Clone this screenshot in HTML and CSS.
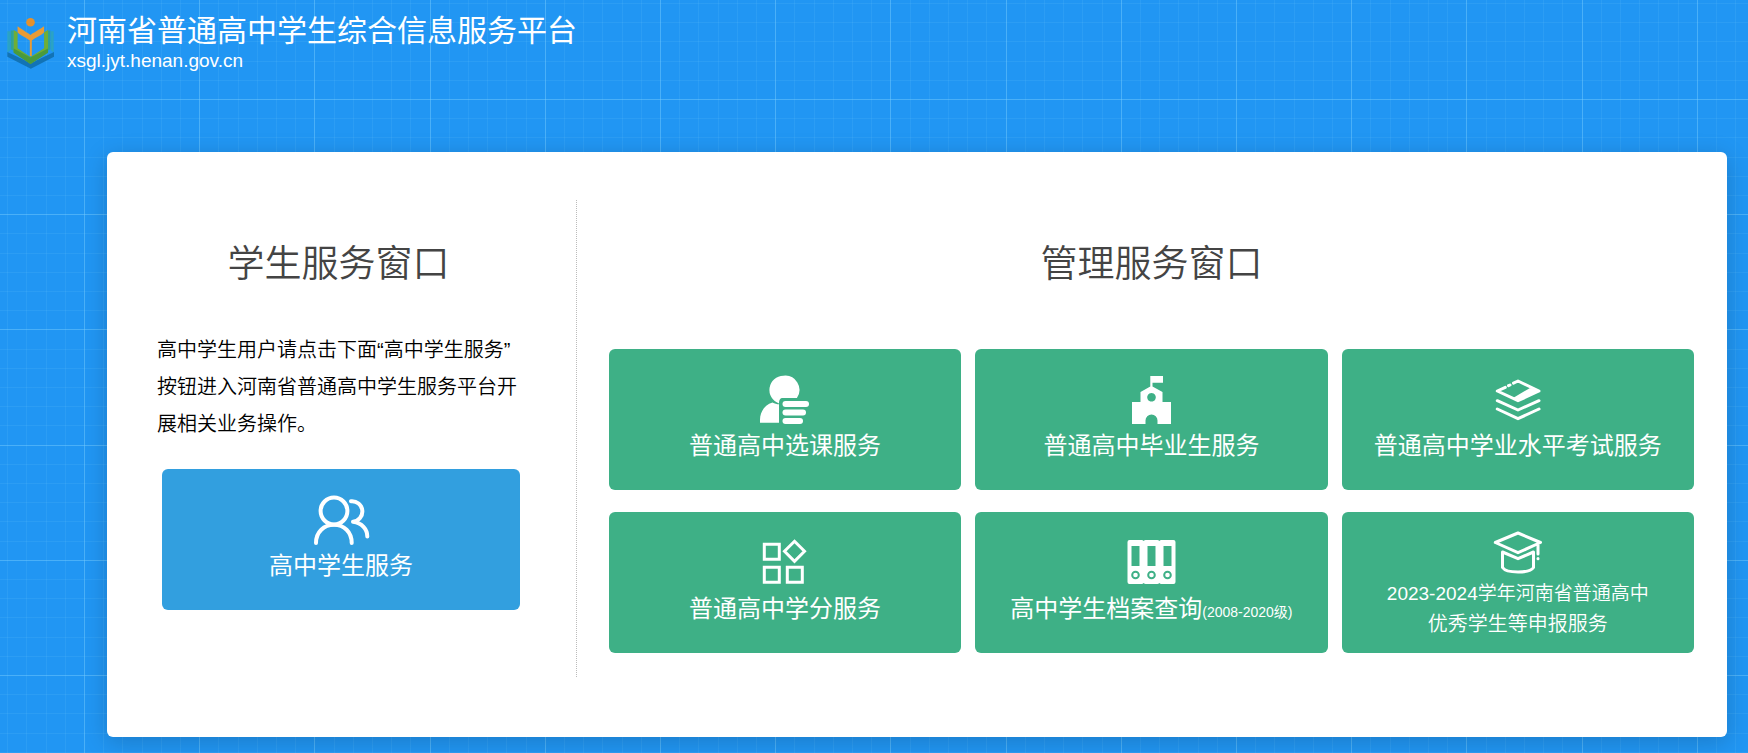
FILE: index.html
```html
<!DOCTYPE html>
<html lang="zh-CN">
<head>
<meta charset="utf-8">
<meta name="viewport" content="width=device-width, initial-scale=1">
<title>河南省普通高中学生综合信息服务平台</title>
<link rel="stylesheet" href="styles.css">
</head>
<body>
<header class="site-header">
  <svg class="logo" viewBox="20 54 142 154" aria-hidden="true">
    <path d="M21 94h8v58l-8 6zM161 94h-8v58l8 6z" fill="#2ba3c4"/>
    <path d="M31 92h9v60l-9-3zM151 92h-9v60l9-3z" fill="#2fa295"/>
    <path d="M21 157l71 34 70-34v14l-70 36-71-36z" fill="#1273b5"/>
    <path d="M40 90l12 7v48l39 27v21l-51-36zM144 90l-12 7v48l-41 27v21l53-36z" fill="#6fae35"/>
    <path d="M40 146l51 27v20l-51-34zM144 146l-53 27v20l53-34z" fill="#4a9a3c"/>
    <path d="M52 79c8 6 24 16 39 26 15-10 33-20 41-26v18c-5 8-26 16-37 25v47h-6v-47c-12-9-31-17-37-25z" fill="#e99b35"/>
    <circle cx="91" cy="67" r="13" fill="#e6912c"/>
  </svg>
  <div class="brand">
    <h1 class="site-title">河南省普通高中学生综合信息服务平台</h1>
    <p class="site-url">xsgl.jyt.henan.gov.cn</p>
  </div>
</header>

<main class="panel">
  <section class="student">
    <h2 class="heading">学生服务窗口</h2>
    <p class="intro">高中学生用户请点击下面“高中学生服务”按钮进入河南省普通高中学生服务平台开展相关业务操作。</p>
    <a class="card card-blue" href="#student">
      <svg class="icon line" viewBox="0 0 54 54" aria-hidden="true">
        <circle cx="20" cy="17" r="13.4"/>
        <path d="M2 49C2 38 10 30.8 20 30.8S37.700 38 37.700 49"/>
        <path d="M37 7.200A10.200 10.200 0 0 1 39 27.800C48 29 53.300 35 53.300 42.500"/>
      </svg>
      <span class="label">高中学生服务</span>
    </a>
  </section>

  <section class="manage">
    <h2 class="heading">管理服务窗口</h2>
    <div class="cards">
      <a class="card" href="#course">
        <svg class="icon" viewBox="0 0 54 54" aria-hidden="true">
          <path d="M25.300 1.700a14.300 14.300 0 0 1 13.600 22.300H25c-3 0-4 2-4 5.500A14.300 14.300 0 0 1 25.300 1.700z"/>
          <path d="M14.500 28.500c2 1.200 4.500 1.800 6.500 1.800v18.400H2v-3c0-8 5-15 12.500-17.200z"/>
          <rect x="24.500" y="27" width="26.500" height="6" rx="3"/>
          <rect x="24.500" y="35.600" width="23.500" height="6" rx="3"/>
          <rect x="24.500" y="44" width="20.500" height="6" rx="3"/>
        </svg>
        <span class="label">普通高中选课服务</span>
      </a>
      <a class="card" href="#graduate">
        <svg class="icon" viewBox="0 0 54 54" aria-hidden="true">
          <path fill-rule="evenodd" d="M26.300 2h12.700v6.700H28.500v3.800L38.500 18v10H47v22H33.500v-3.500a6 6 0 0 0-12 0V50H8V28h8.500V18l9.800-5.500zM27.500 19a4.300 4.300 0 1 0 .01 0z"/>
        </svg>
        <span class="label">普通高中毕业生服务</span>
      </a>
      <a class="card" href="#exam">
        <svg class="icon line thin" viewBox="0 0 54 54" aria-hidden="true">
          <path d="M22.500 9.100L27 7l21 10-21 9.700L6.300 17l8-3.700M17.500 11.700l1.500-.7"/>
          <path class="solid" d="M22 24l17-10 9 3-21 9.700z"/>
          <path d="M6.300 26.700L27 36l21-9.300M6.300 35L27 44.700 48 35"/>
        </svg>
        <span class="label">普通高中学业水平考试服务</span>
      </a>
      <a class="card" href="#credit">
        <svg class="icon line square" viewBox="0 0 54 54" aria-hidden="true">
          <path d="M6.300 7.300h15v15h-15zM6.300 30.300h15v15h-15zM29.300 30.300h15v15h-15zM36.500 4.300L46.500 14.300 36.500 24.300 26.500 14.300z"/>
        </svg>
        <span class="label">普通高中学分服务</span>
      </a>
      <a class="card" href="#archive">
        <svg class="icon" viewBox="0 0 54 54" aria-hidden="true">
          <path fill-rule="evenodd" d="M5.500 3h12q1.500 0 2.200 1 .7-1 2-1h11.600q1.300 0 2 1 .7-1 2.200-1h12q2 0 2 2v40q0 2-2 2h-12q-1.500 0-2.200-1-.7 1-2 1H21.700q-1.300 0-2-1-.7 1-2.200 1h-12q-2 0-2-2V5q0-2 2-2zM7.500 9v20h8V9zM23.500 9v20h8V9zM39.500 9v20h8V9z"/>
          <g class="rings"><circle cx="11.500" cy="38" r="3.300"/><circle cx="27.500" cy="38" r="3.300"/><circle cx="43.500" cy="38" r="3.300"/></g>
        </svg>
        <span class="label">高中学生档案查询<small class="years">(2008-2020级)</small></span>
      </a>
      <a class="card" href="#honor">
        <svg class="icon line thin" viewBox="0 0 54 54" aria-hidden="true">
          <path d="M4.300 17.500L27 8l22.500 9.500L27 27.700zM11.500 27v15.500c2 3 8.500 4.500 15.500 4.500s13.500-1.500 15.500-4.500V27L27 33.700zM47 19v10M47 33.500v.2"/>
        </svg>
        <span class="label-small">2023-2024学年河南省普通高中</span>
        <span class="label-medium">优秀学生等申报服务</span>
      </a>
    </div>
  </section>
</main>
</body>
</html>
```
FILE: styles.css
```css
* {
  box-sizing: border-box;
}

body {
  margin: 0;
  min-height: 100vh;
  padding-bottom: 15px;
  font-family: "Liberation Sans", "Noto Sans CJK SC", sans-serif;
  font-weight: 350;
  color: #000;
  background-color: #2196f3;
  background-image:
    repeating-linear-gradient(to right, rgba(120, 205, 255, 0.4) 0 1px, transparent 1px 20%),
    repeating-linear-gradient(to bottom, rgba(120, 205, 255, 0.4) 0 1px, transparent 1px 20%),
    repeating-linear-gradient(to right, rgba(120, 205, 255, 0.12) 0 1px, transparent 1px 20%),
    repeating-linear-gradient(to bottom, rgba(120, 205, 255, 0.12) 0 1px, transparent 1px 20%);
  background-size: 576px 576px, 576px 576px, 96px 96px, 96px 96px;
  background-position: 84px 99px;
}

h1, h2, p {
  margin: 0;
  font-weight: 350;
}

.site-header {
  display: flex;
  align-items: flex-start;
  gap: 13px;
  height: 152px;
  padding: 12px 7px;
  color: #fff;
}

.logo {
  width: 47px;
  height: 51px;
  margin-top: 6px;
}

.site-title {
  font-size: 30px;
  line-height: 38px;
  font-weight: 400;
}

.site-url {
  font-size: 19px;
  line-height: 22px;
}

.panel {
  display: flex;
  margin: 0 21px 0 107px;
  padding: 48px 0 60px;
  background: #fff;
  border-radius: 6px;
  box-shadow: 0 5px 24px rgba(0, 0, 0, 0.18);
}

.student {
  flex: 0 0 29%;
  padding: 28px 56px 67px 50px;
  border-right: 1px dotted #bbb;
}

.manage {
  flex: 1;
  padding: 28px 33px 24px 32px;
}

.heading {
  font-size: 37px;
  line-height: 74px;
  text-align: center;
  color: #444;
}

.intro {
  margin-top: 30px;
  font-size: 20px;
  line-height: 37px;
}

.card {
  display: flex;
  flex-direction: column;
  align-items: center;
  justify-content: center;
  min-height: 141px;
  padding-bottom: 1px;
  border-radius: 6px;
  background: #3eb086;
  color: #fff;
  font-weight: 400;
  text-decoration: none;
  white-space: nowrap;
}

.card-blue {
  margin: 26px 0 0 5px;
  background: #329fdf;
}

.cards {
  display: grid;
  grid-template-columns: repeat(3, 1fr);
  gap: 22px 14px;
  margin-top: 47px;
}

.icon {
  width: 54px;
  height: 54px;
  fill: #fff;
  overflow: visible;
}

.line {
  fill: none;
  stroke: #fff;
  stroke-width: 4;
  stroke-linecap: round;
  stroke-linejoin: round;
}

.thin {
  stroke-width: 3;
}

.square {
  stroke-width: 3;
  stroke-linejoin: miter;
}

.solid {
  fill: #fff;
  stroke: none;
}

.rings {
  fill: none;
  stroke: #3eb086;
  stroke-width: 2;
}

.label {
  font-size: 24px;
  line-height: 36px;
}

.years {
  font-size: 14px;
  line-height: 14px;
}

.label-small {
  font-size: 19px;
  line-height: 30px;
  font-weight: 350;
}

.label-medium {
  font-size: 20px;
  line-height: 30px;
  font-weight: 350;
}
```
